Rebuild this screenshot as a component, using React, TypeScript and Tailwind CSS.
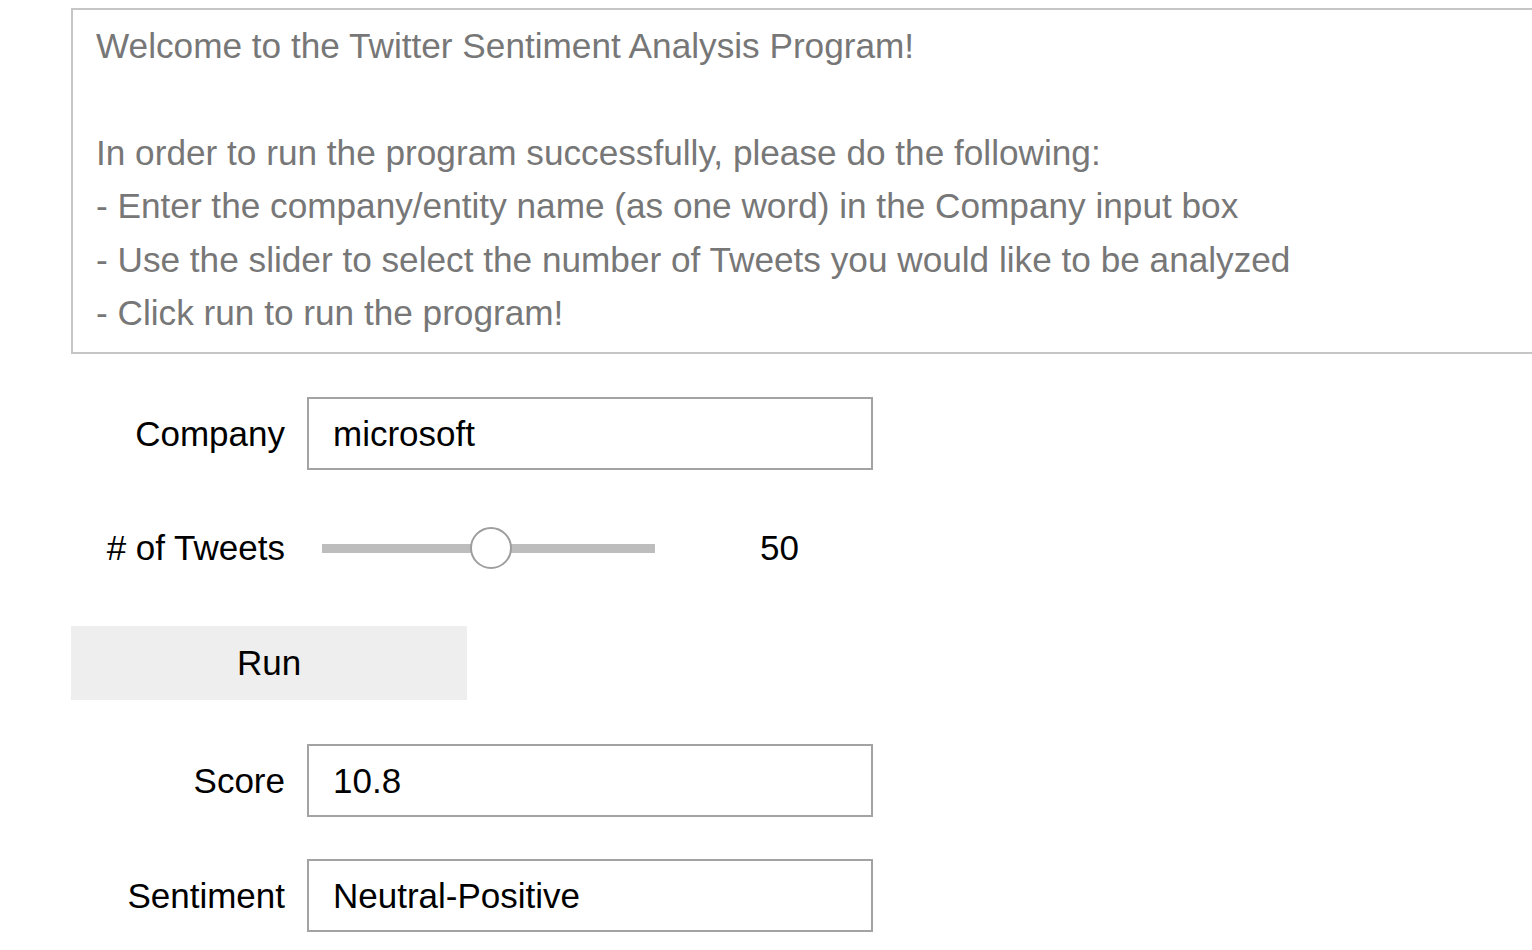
import { useState } from "react";

const intro = [
  "Welcome to the Twitter Sentiment Analysis Program!",
  "",
  "In order to run the program successfully, please do the following:",
  "- Enter the company/entity name (as one word) in the Company input box",
  "- Use the slider to select the number of Tweets you would like to be analyzed",
  "- Click run to run the program!",
];

function Row({ label, children, className = "" }: { label: string; children: React.ReactNode; className?: string }) {
  return (
    <div className={`flex h-[73px] items-center ${className}`}>
      <span className="w-[214px] shrink-0 text-right text-black">{label}</span>
      <div className="ml-[22px] flex h-full items-center">{children}</div>
    </div>
  );
}

export default function App() {
  const [company, setCompany] = useState("microsoft");
  const [tweets, setTweets] = useState(50);

  return (
    <main className="min-h-screen overflow-hidden bg-white pl-[71px] pt-2 font-['Liberation_Sans',Arial,sans-serif] text-[35px]">
      <div className="w-[1520px] border-2 border-[#c6c6c6] pb-[13px] pl-[23px] pt-[9px] text-[35.2px] leading-[53.4px] text-[#777777]">
        {intro.map((line, i) => (
          <div key={i} className="h-[53.4px] whitespace-nowrap">
            {line}
          </div>
        ))}
      </div>

      <Row label="Company" className="mt-[43px]">
        <input
          value={company}
          onChange={(e) => setCompany(e.target.value)}
          className="h-[73px] w-[566px] border-2 border-[#a3a3a3] pl-[24px] text-black outline-none"
        />
      </Row>

      <Row label="# of Tweets" className="mt-[41px]">
        <div className="relative ml-[15px] h-[42px] w-[333px]">
          <div className="absolute left-0 right-0 top-[17px] h-[9px] bg-[#bdbdbd]" />
          <div
            className="absolute top-0 h-[42px] w-[42px] -translate-x-1/2 rounded-full border-2 border-[#9e9e9e] bg-white"
            style={{ left: `${(tweets / 100) * 338}px` }}
          />
          <input
            type="range"
            min={0}
            max={100}
            value={tweets}
            onChange={(e) => setTweets(Number(e.target.value))}
            className="absolute inset-0 w-full cursor-pointer opacity-0"
          />
        </div>
        <span className="ml-[105px] text-black">{tweets}</span>
      </Row>

      <button className="mt-[42px] flex h-[74px] w-[396px] items-center justify-center bg-[#eeeeee] text-black">
        Run
      </button>

      <Row label="Score" className="mt-[44px]">
        <div className="flex h-[73px] w-[566px] items-center border-2 border-[#a3a3a3] pl-[24px] text-black">10.8</div>
      </Row>

      <Row label="Sentiment" className="mt-[42px]">
        <div className="flex h-[73px] w-[566px] items-center border-2 border-[#a3a3a3] pl-[24px] text-black">
          Neutral-Positive
        </div>
      </Row>
    </main>
  );
}
